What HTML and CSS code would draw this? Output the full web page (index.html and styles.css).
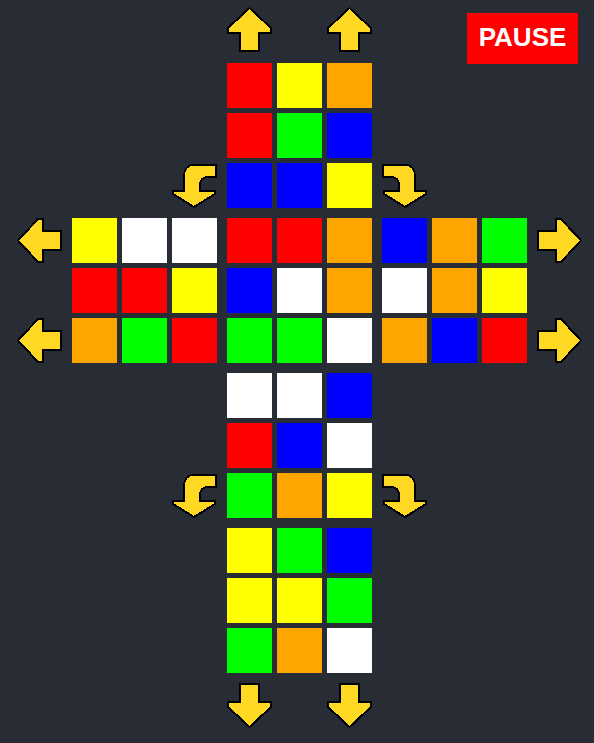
FILE: index.html
```html
<!DOCTYPE html>
<html>
<head>
<meta charset="utf-8">
<link rel="stylesheet" href="styles.css">
</head>
<body>
<div class="board">
  <div class="pair up-row">
    <svg class="arrow" viewBox="0 0 45 45"><polygon class="ashape" points="22.5,1 44,21 44,26 32,26 32,44 13,44 13,26 1,26 1,21"/></svg>
    <svg class="arrow" viewBox="0 0 45 45"><polygon class="ashape" points="22.5,1 44,21 44,26 32,26 32,44 13,44 13,26 1,26 1,21"/></svg>
  </div>

  <svg class="arrow curve c-tl" viewBox="0 0 45 45"><g transform="matrix(-1 0 0 1 45 0)"><path class="ashape" d="M1 2 L24 2 C30 2 33 7 33 14 L33 28 L44 28 L44 31 L23 44 L2 31 L2 28 L17 28 L17 23 C17 17 14 14 9 14 L1 14 Z"/></g></svg>

  <div class="face f-up">
    <i class="r"></i><i class="y"></i><i class="o"></i>
    <i class="r"></i><i class="g"></i><i class="b"></i>
    <i class="b"></i><i class="b"></i><i class="y"></i>
  </div>

  <svg class="arrow curve c-tr" viewBox="0 0 45 45"><path class="ashape" d="M1 2 L24 2 C30 2 33 7 33 14 L33 28 L44 28 L44 31 L23 44 L2 31 L2 28 L17 28 L17 23 C17 17 14 14 9 14 L1 14 Z"/></svg>

  <div class="pair side-left">
    <svg class="arrow" viewBox="0 0 45 45"><g transform="rotate(-90 22.5 22.5)"><polygon class="ashape" points="22.5,1 44,21 44,26 32,26 32,44 13,44 13,26 1,26 1,21"/></g></svg>
    <svg class="arrow" viewBox="0 0 45 45"><g transform="rotate(-90 22.5 22.5)"><polygon class="ashape" points="22.5,1 44,21 44,26 32,26 32,44 13,44 13,26 1,26 1,21"/></g></svg>
  </div>

  <div class="face f-left">
    <i class="y"></i><i class="w"></i><i class="w"></i>
    <i class="r"></i><i class="r"></i><i class="y"></i>
    <i class="o"></i><i class="g"></i><i class="r"></i>
  </div>

  <div class="face f-front">
    <i class="r"></i><i class="r"></i><i class="o"></i>
    <i class="b"></i><i class="w"></i><i class="o"></i>
    <i class="g"></i><i class="g"></i><i class="w"></i>
  </div>

  <div class="face f-right">
    <i class="b"></i><i class="o"></i><i class="g"></i>
    <i class="w"></i><i class="o"></i><i class="y"></i>
    <i class="o"></i><i class="b"></i><i class="r"></i>
  </div>

  <div class="pair side-right">
    <svg class="arrow" viewBox="0 0 45 45"><g transform="rotate(90 22.5 22.5)"><polygon class="ashape" points="22.5,1 44,21 44,26 32,26 32,44 13,44 13,26 1,26 1,21"/></g></svg>
    <svg class="arrow" viewBox="0 0 45 45"><g transform="rotate(90 22.5 22.5)"><polygon class="ashape" points="22.5,1 44,21 44,26 32,26 32,44 13,44 13,26 1,26 1,21"/></g></svg>
  </div>

  <svg class="arrow curve c-bl" viewBox="0 0 45 45"><g transform="matrix(-1 0 0 1 45 0)"><path class="ashape" d="M1 2 L24 2 C30 2 33 7 33 14 L33 28 L44 28 L44 31 L23 44 L2 31 L2 28 L17 28 L17 23 C17 17 14 14 9 14 L1 14 Z"/></g></svg>

  <div class="face f-down">
    <i class="w"></i><i class="w"></i><i class="b"></i>
    <i class="r"></i><i class="b"></i><i class="w"></i>
    <i class="g"></i><i class="o"></i><i class="y"></i>
  </div>

  <svg class="arrow curve c-br" viewBox="0 0 45 45"><path class="ashape" d="M1 2 L24 2 C30 2 33 7 33 14 L33 28 L44 28 L44 31 L23 44 L2 31 L2 28 L17 28 L17 23 C17 17 14 14 9 14 L1 14 Z"/></svg>

  <div class="face f-back">
    <i class="y"></i><i class="g"></i><i class="b"></i>
    <i class="y"></i><i class="y"></i><i class="g"></i>
    <i class="g"></i><i class="o"></i><i class="w"></i>
  </div>

  <div class="pair down-row">
    <svg class="arrow" viewBox="0 0 45 45"><g transform="rotate(180 22.5 22.5)"><polygon class="ashape" points="22.5,1 44,21 44,26 32,26 32,44 13,44 13,26 1,26 1,21"/></g></svg>
    <svg class="arrow" viewBox="0 0 45 45"><g transform="rotate(180 22.5 22.5)"><polygon class="ashape" points="22.5,1 44,21 44,26 32,26 32,44 13,44 13,26 1,26 1,21"/></g></svg>
  </div>
</div>

<button class="pause">PAUSE</button>
</body>
</html>
```

FILE: styles.css
```css
html, body {
  margin: 0;
  padding: 0;
  background: #282c34;
  height: 100%;
  overflow: hidden;
}

body {
  font-family: "Liberation Sans", Arial, sans-serif;
}

.board {
  display: grid;
  grid-template-columns: 45px repeat(3, 145px) 45px;
  grid-template-rows: 46px repeat(4, 145px) 45px;
  gap: 10px;
  padding: 7px 0 0 17px;
}

.arrow {
  display: block;
  width: 45px;
  height: 45px;
  shape-rendering: crispEdges;
}

.ashape {
  fill: #ffd824;
  stroke: #000;
  stroke-width: 2;
  stroke-linejoin: miter;
}

.pair {
  display: flex;
  justify-content: space-between;
}

.up-row { grid-column: 3; grid-row: 1; align-items: flex-start; }
.down-row { grid-column: 3; grid-row: 6; align-items: flex-start; }

.side-left { grid-column: 1; grid-row: 3; flex-direction: column; }
.side-right { grid-column: 5; grid-row: 3; flex-direction: column; }

.curve { align-self: end; }
.c-tl { grid-column: 2; grid-row: 2; justify-self: end; }
.c-tr { grid-column: 4; grid-row: 2; justify-self: start; }
.c-bl { grid-column: 2; grid-row: 4; justify-self: end; }
.c-br { grid-column: 4; grid-row: 4; justify-self: start; }

.face {
  display: grid;
  grid-template-columns: repeat(3, 45px);
  grid-template-rows: repeat(3, 45px);
  gap: 5px;
}

.f-up { grid-column: 3; grid-row: 2; }
.f-left { grid-column: 2; grid-row: 3; }
.f-front { grid-column: 3; grid-row: 3; }
.f-right { grid-column: 4; grid-row: 3; }
.f-down { grid-column: 3; grid-row: 4; }
.f-back { grid-column: 3; grid-row: 5; }

.face i { display: block; }
.r { background: #ff0000; }
.y { background: #ffff00; }
.o { background: #ffa500; }
.b { background: #0000ff; }
.g { background: #00ff00; }
.w { background: #ffffff; }

.pause {
  position: absolute;
  left: 467px;
  top: 13px;
  width: 111px;
  height: 51px;
  box-sizing: border-box;
  margin: 0;
  padding: 0 0 3px 0;
  border: none;
  background: #ff0000;
  color: #ffffff;
  font-family: "Liberation Sans", Arial, sans-serif;
  font-weight: bold;
  font-size: 26px;
  line-height: 48px;
  text-align: center;
}
```
